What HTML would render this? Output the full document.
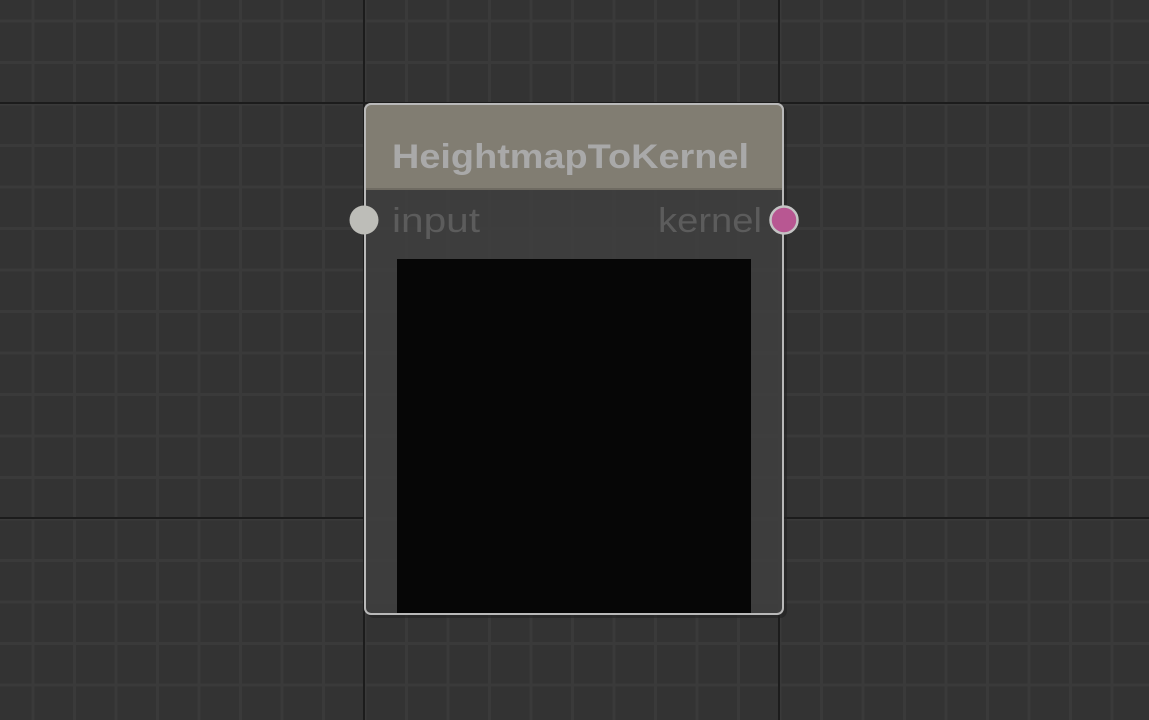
<!DOCTYPE html>
<html><head><style>
html,body{margin:0;padding:0;width:1149px;height:720px;overflow:hidden;background:#333}
svg{display:block}
</style></head><body>
<svg width="1149" height="720" viewBox="0 0 1149 720" xmlns="http://www.w3.org/2000/svg">
<defs>
<pattern id="g" x="31.5" y="19.5" width="41.5" height="41.5" patternUnits="userSpaceOnUse">
<rect x="0" y="0" width="3" height="41.5" fill="#3a3a3a"/>
<rect x="0" y="0" width="41.5" height="3" fill="#3a3a3a"/>
</pattern>
<clipPath id="nc"><rect x="364" y="103" width="420" height="512" rx="7"/></clipPath>
</defs>
<rect width="1149" height="720" fill="#333"/>
<rect width="1149" height="720" fill="url(#g)"/>
<rect x="363" y="0" width="2" height="720" fill="#1c1c1c"/>
<rect x="778" y="0" width="2" height="720" fill="#1c1c1c"/>
<rect x="0" y="102" width="1149" height="2" fill="#1c1c1c"/>
<rect x="0" y="517" width="1149" height="2" fill="#1c1c1c"/>
<!-- shadow -->
<rect x="367" y="106" width="420" height="512" rx="7" fill="#222" opacity="0.6"/>
<g clip-path="url(#nc)">
<rect x="364" y="103" width="420" height="512" fill="#333"/>
<rect x="364" y="103" width="420" height="512" fill="url(#g)" opacity="0.5"/>
<rect x="364" y="103" width="420" height="512" fill="rgba(70,70,70,0.55)"/>
<rect x="364" y="103" width="420" height="86" fill="#817d72"/>
<rect x="364" y="188" width="420" height="2" fill="#6f6b62"/>
<rect x="397" y="259" width="354" height="356" fill="#060606"/>
</g>
<rect x="365" y="104" width="418" height="510" rx="6" fill="none" stroke="#b9b9b9" stroke-width="2"/>
<text x="392" y="168" font-family="Liberation Sans, sans-serif" font-weight="bold" font-size="34" fill="#a9a9a9" textLength="357" lengthAdjust="spacingAndGlyphs">HeightmapToKernel</text>
<text x="392" y="232" font-family="Liberation Sans, sans-serif" font-size="34" fill="#5c5c5c" textLength="88" lengthAdjust="spacingAndGlyphs">input</text>
<text x="658" y="232" font-family="Liberation Sans, sans-serif" font-size="34" fill="#5c5c5c" textLength="104" lengthAdjust="spacingAndGlyphs">kernel</text>
<circle cx="364" cy="220" r="14.5" fill="#bdbdb8"/>
<circle cx="784" cy="220" r="13.5" fill="#b85792" stroke="#c4c4c4" stroke-width="2.5"/>
</svg>
</body></html>
